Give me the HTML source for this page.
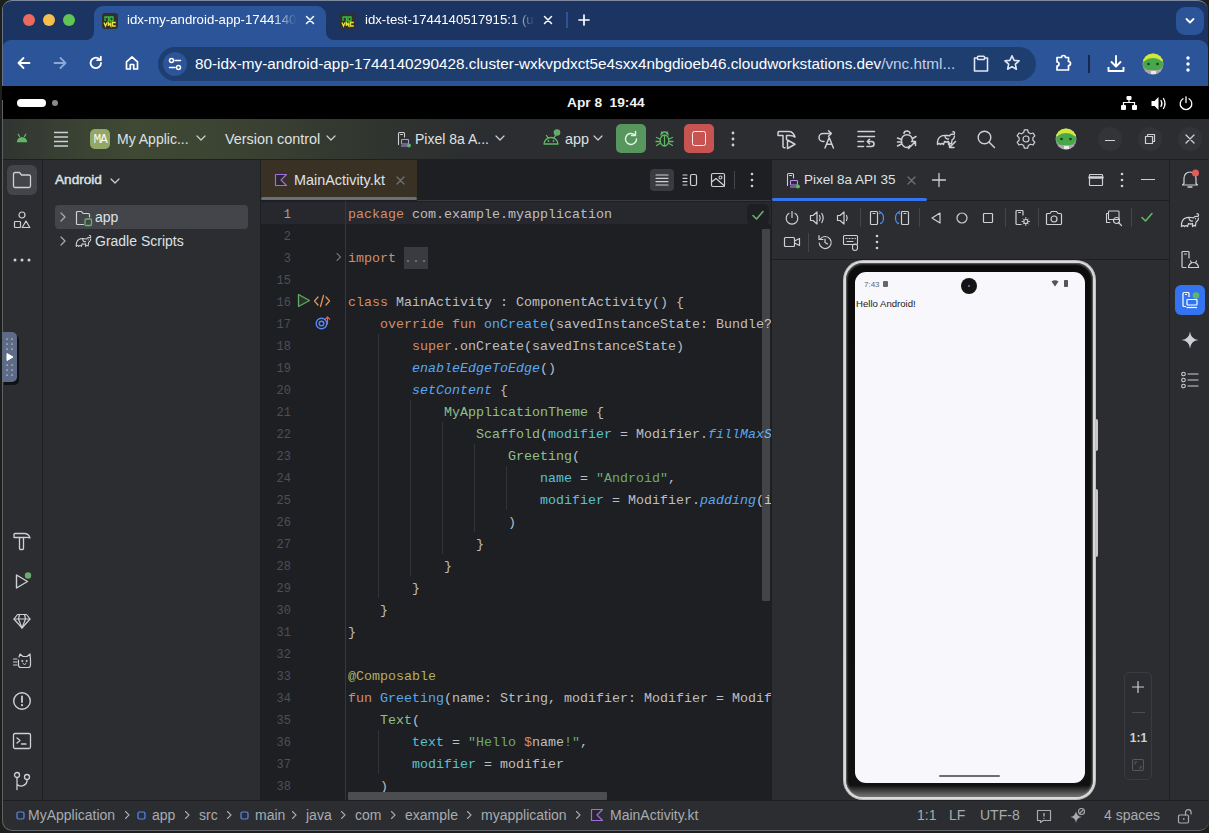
<!DOCTYPE html>
<html><head><meta charset="utf-8">
<style>
*{box-sizing:border-box;margin:0;padding:0}
html,body{width:1209px;height:833px;overflow:hidden}
body{position:relative;background:#1c1f1a;font-family:"Liberation Sans",sans-serif;color:#dfe1e5}
.a{position:absolute}
svg{position:absolute;overflow:visible}
.mono{font-family:"Liberation Mono",monospace}
#win{left:2px;top:0;width:1206px;height:830px;border-radius:10px;overflow:hidden;background:#1c3461;border-top:1px solid #7d889c}
.ui{font-size:14px;white-space:pre;color:#dfe1e5;line-height:16px}
.ln{font-family:"Liberation Mono",monospace;font-size:12px;color:#4b5059;text-align:right;width:40px;left:251px;line-height:22px}
.code{font-family:"Liberation Mono",monospace;font-size:13.33px;white-space:pre;color:#bcbec4;line-height:22px;left:348px}
.k{color:#cf8e6d}.f{color:#56a8f5}.i{font-style:italic;color:#56a8f5}.s{color:#6aab73}.c{color:#8fbf8f}.n{color:#56c1d6}.an{color:#b3ae60}
.guide{width:1px;background:#313438}
.ic{stroke:#ced0d6;fill:none;stroke-width:1.2;stroke-linecap:round;stroke-linejoin:round}
</style></head><body>
<div id="win" class="a">
  <!-- ===== Browser tab strip ===== -->
  <div class="a" style="left:27px;top:19px;width:12px;height:12px;margin:-6px;border-radius:50%;background:#ec6a5e"></div>
  <div class="a" style="left:47px;top:19px;width:12px;height:12px;margin:-6px;border-radius:50%;background:#f4bf4f"></div>
  <div class="a" style="left:67px;top:19px;width:12px;height:12px;margin:-6px;border-radius:50%;background:#61c554"></div>
  <!-- active tab -->
  <div class="a" style="left:92px;top:5px;width:232px;height:35px;background:#2b5598;border-radius:9px 9px 0 0"></div>
  <div class="a" style="left:84px;top:31px;width:8px;height:8px;background:#2b5598"></div>
  <div class="a" style="left:76px;top:23px;width:16px;height:16px;background:#1c3461;border-radius:50%"></div>
  <div class="a" style="left:324px;top:31px;width:8px;height:8px;background:#2b5598"></div>
  <div class="a" style="left:324px;top:23px;width:16px;height:16px;background:#1c3461;border-radius:50%"></div>
  <!-- toolbar -->
  <div class="a" style="left:0;top:39px;width:1206px;height:47px;background:#2b5598;border-radius:9px 9px 0 0"></div>
  <div class="a" style="left:0;top:85px;width:1206px;height:1px;background:#4a78c0"></div>
  <!-- tab 1 content -->
  <svg style="left:100px;top:12px" width="16" height="16"><rect width="16" height="16" rx="3" fill="#303030"/><path d="M3 8V4H6.5V8M8 4H11V8H8Z" stroke="#3dbb3d" stroke-width="1.3" fill="none"/><path d="M2 9.5L3.5 13L5 9.5M6.3 13V9.5L8.8 13V9.5M13.8 9.5H10.5V13H13.8" stroke="#e6e33a" stroke-width="1.3" fill="none"/></svg>
  <div class="a ui" style="left:125px;top:11px;font-size:13.2px;color:#fff;width:170px;overflow:hidden;-webkit-mask-image:linear-gradient(90deg,#000 145px,transparent 170px)">idx-my-android-app-1744140290428</div>
  <svg style="left:303px;top:14px" width="10" height="10"><path d="M1.5 1.5L8.5 8.5M8.5 1.5L1.5 8.5" stroke="#fff" stroke-width="1.5" stroke-linecap="round"/></svg>
  <!-- tab 2 -->
  <svg style="left:338px;top:12px" width="16" height="16"><rect width="16" height="16" rx="3" fill="#303030"/><path d="M3 8V4H6.5V8M8 4H11V8H8Z" stroke="#3dbb3d" stroke-width="1.3" fill="none"/><path d="M2 9.5L3.5 13L5 9.5M6.3 13V9.5L8.8 13V9.5M13.8 9.5H10.5V13H13.8" stroke="#e6e33a" stroke-width="1.3" fill="none"/></svg>
  <div class="a ui" style="left:363px;top:11px;font-size:13.2px;color:#fff;width:170px;overflow:hidden;-webkit-mask-image:linear-gradient(90deg,#000 148px,transparent 170px)">idx-test-1744140517915:1 (us</div>
  <svg style="left:541px;top:14px" width="10" height="10"><path d="M1.5 1.5L8.5 8.5M8.5 1.5L1.5 8.5" stroke="#fff" stroke-width="1.5" stroke-linecap="round"/></svg>
  <div class="a" style="left:564px;top:11px;width:2px;height:16px;background:#2b5598"></div>
  <svg style="left:576px;top:13px" width="12" height="12"><path d="M6 1V11M1 6H11" stroke="#fff" stroke-width="1.7" stroke-linecap="round"/></svg>
  <div class="a" style="left:1174px;top:6px;width:28px;height:28px;background:#2b5598;border-radius:9px"></div>
  <svg style="left:1183px;top:16px" width="10" height="8"><path d="M1.5 2L5 5.5L8.5 2" stroke="#fff" stroke-width="1.8" fill="none" stroke-linecap="round" stroke-linejoin="round"/></svg>
  <!-- toolbar icons -->
  <svg style="left:14px;top:54px" width="16" height="16"><path d="M13.5 8H2.5M7.5 3L2.5 8L7.5 13" stroke="#fff" stroke-width="1.8" fill="none" stroke-linecap="round" stroke-linejoin="round"/></svg>
  <svg style="left:50px;top:54px" width="16" height="16"><path d="M2.5 8H13.5M8.5 3L13.5 8L8.5 13" stroke="#8ea8d6" stroke-width="1.8" fill="none" stroke-linecap="round" stroke-linejoin="round"/></svg>
  <svg style="left:86px;top:54px" width="16" height="16"><path d="M13 8A5.2 5.2 0 1 1 11.2 4" stroke="#fff" stroke-width="1.8" fill="none" stroke-linecap="round"/><path d="M12.8 1.6V5.2H9.2" stroke="#fff" stroke-width="1.8" fill="none" stroke-linecap="round" stroke-linejoin="round"/></svg>
  <svg style="left:122px;top:54px" width="16" height="16"><path d="M2.5 14V6.8L8 2L13.5 6.8V14H9.7V9.5H6.3V14Z" stroke="#fff" stroke-width="1.7" fill="none" stroke-linejoin="round"/></svg>
  <!-- omnibox -->
  <div class="a" style="left:156px;top:46px;width:878px;height:34px;background:#1e3e70;border-radius:17px"></div>
  <div class="a" style="left:161px;top:51px;width:24px;height:24px;background:#2b5598;border-radius:50%"></div>
  <svg style="left:165px;top:55px" width="16" height="16"><circle cx="4.5" cy="4.5" r="2" stroke="#fff" stroke-width="1.5" fill="none"/><path d="M8 4.5H13.5M2.5 11.5H8" stroke="#fff" stroke-width="1.5" stroke-linecap="round"/><circle cx="11.5" cy="11.5" r="2" stroke="#fff" stroke-width="1.5" fill="none"/></svg>
  <div class="a ui" style="left:193px;top:54px;font-size:15.3px;line-height:18px;color:#fff">80-idx-my-android-app-1744140290428.cluster-wxkvpdxct5e4sxx4nbgdioeb46.cloudworkstations.dev<span style="color:#c3cfe6">/vnc.html...</span></div>
  <svg style="left:970px;top:54px" width="18" height="18"><path d="M5.5 3H2.5V16H15.5V3H12.5" stroke="#dfe6f2" stroke-width="1.6" fill="none" stroke-linejoin="round"/><rect x="5.5" y="1.2" width="7" height="3.3" rx="0.8" stroke="#dfe6f2" stroke-width="1.5" fill="none"/></svg>
  <svg style="left:1001px;top:53px" width="18" height="18"><path d="M9 1.8L11.1 6.4L16.1 6.9L12.3 10.2L13.4 15.2L9 12.6L4.6 15.2L5.7 10.2L1.9 6.9L6.9 6.4Z" stroke="#dfe6f2" stroke-width="1.6" fill="none" stroke-linejoin="round"/></svg>
  <svg style="left:1051px;top:53px" width="20" height="20"><path d="M4 3.5H8.5A2 2 0 0 1 12.5 3.5H15.5V7.5A2 2 0 0 1 15.5 11.5V16H4V12A2 2 0 0 0 4 8Z" stroke="#fff" stroke-width="1.7" fill="none" stroke-linejoin="round"/></svg>
  <div class="a" style="left:1086px;top:54px;width:2px;height:18px;background:#17294a"></div>
  <svg style="left:1104px;top:53px" width="20" height="20"><path d="M10 2V12M5.5 8L10 12.5L14.5 8" stroke="#fff" stroke-width="1.9" fill="none" stroke-linecap="round" stroke-linejoin="round"/><path d="M2.5 13V17H17.5V13" stroke="#fff" stroke-width="1.9" fill="none" stroke-linejoin="round"/></svg>
  <svg style="left:1140px;top:52px" width="22" height="22"><defs><clipPath id="c1140"><circle cx="11" cy="11" r="10.5"/></clipPath></defs><g clip-path="url(#c1140)"><rect width="22" height="22" fill="#9aa09a"/><rect y="0" width="22" height="8" fill="#cfe83a"/><ellipse cx="11" cy="11.5" rx="10" ry="6.5" fill="#47a84a"/><rect x="0" y="17" width="22" height="5" fill="#a8aaa8"/><circle cx="6.5" cy="11" r="1.3" fill="#1d3a1d"/><circle cx="15.5" cy="11" r="1.3" fill="#1d3a1d"/><rect x="9" y="18" width="5" height="3" fill="#e8e8f0"/></g></svg>
  <div class="a" style="left:0;top:0;width:1px;height:86px;background:#6a7488"></div>
  <svg style="left:1183px;top:54px" width="6" height="18"><circle cx="3" cy="3" r="1.7" fill="#fff"/><circle cx="3" cy="9" r="1.7" fill="#fff"/><circle cx="3" cy="15" r="1.7" fill="#fff"/></svg>
</div>
<!-- VNC area -->
<div class="a" style="left:2px;top:86px;width:1207px;height:33px;background:#000"></div>
<div class="a" style="left:17px;top:99px;width:29px;height:8px;background:#fff;border-radius:4px"></div>
<div class="a" style="left:52px;top:100px;width:6px;height:6px;background:#8a8a8a;border-radius:50%"></div>
<div class="a ui" style="left:567px;top:95px;font-size:13.7px;font-weight:700;color:#f2f2f2">Apr 8  19:44</div>
<svg style="left:1121px;top:96px" width="16" height="14"><rect x="5.5" y="0" width="5" height="4" rx="1" fill="#fff"/><rect x="0" y="9" width="5" height="5" rx="1" fill="#fff"/><rect x="11" y="9" width="5" height="5" rx="1" fill="#fff"/><path d="M8 4V6.5M2.5 9V6.5H13.5V9" stroke="#fff" stroke-width="1.2" fill="none"/></svg>
<svg style="left:1151px;top:96px" width="16" height="15"><path d="M0.5 5H3.5L7.5 1V14L3.5 10H0.5Z" fill="#fff"/><path d="M10 4.5Q11.8 7.5 10 10.5M12.5 2.5Q15.5 7.5 12.5 12.5" stroke="#fff" stroke-width="1.3" fill="none" stroke-linecap="round"/></svg>
<svg style="left:1179px;top:96px" width="14" height="14"><path d="M4 2.8A5.8 5.8 0 1 0 10 2.8" stroke="#fff" stroke-width="1.3" fill="none" stroke-linecap="round"/><path d="M7 0.8V6.5" stroke="#fff" stroke-width="1.3" stroke-linecap="round"/></svg>

<!-- ===== IDE ===== -->
<div class="a" style="left:0;top:0;width:1209px;height:833px;clip-path:inset(119px 0px 2px 2px round 0 0 10px 10px)">
  <div class="a" style="left:2px;top:119px;width:1207px;height:712px;background:#2b2d30"></div>
  <!-- main toolbar -->
  <div class="a" style="left:2px;top:119px;width:1206px;height:40px;background:linear-gradient(90deg,#313431 0,#394033 60px,#3f4934 130px,#3b4232 240px,#31352f 370px,#2b2d30 480px)"></div>
  <div class="a" style="left:2px;top:159px;width:1206px;height:1px;background:#1e1f22"></div>
  <!-- left strip border -->
  <div class="a" style="left:42px;top:160px;width:1px;height:641px;background:#1e1f22"></div>
  <div class="a" style="left:260px;top:160px;width:1px;height:641px;background:#1e1f22"></div>
  <!-- editor -->
  <div class="a" style="left:261px;top:160px;width:511px;height:641px;background:#1e1f22"></div>
  <div class="a" style="left:261px;top:160px;width:156px;height:37px;background:#3a3125"></div>
  <div class="a" style="left:261px;top:197px;width:156px;height:3px;background:#6b6e73;border-radius:1.5px"></div>
  <div class="a" style="left:417px;top:200px;width:354px;height:1px;background:#393b40"></div>
  <div class="a" style="left:261px;top:202px;width:510px;height:22px;background:#26282e"></div>
  <div class="a" style="left:345px;top:201px;width:1px;height:600px;background:#35373c"></div>
  <!-- emulator panel border -->
  <div class="a" style="left:771px;top:160px;width:1px;height:641px;background:#1e1f22"></div>
  <div class="a" style="left:772px;top:200px;width:398px;height:1px;background:#1e1f22"></div>
  <div class="a" style="left:772px;top:259px;width:398px;height:1px;background:#1e1f22"></div>
  <div class="a" style="left:1169px;top:160px;width:1px;height:641px;background:#1e1f22"></div>
  <div class="a" style="left:772px;top:198px;width:155px;height:3px;background:#3574f0;border-radius:1.5px"></div>
  <!-- toolbar content -->
  <svg style="left:16px;top:133px" width="12" height="10"><path d="M0.8 9.2A5.2 5.2 0 0 1 11.2 9.2Z" fill="#5fb865"/><path d="M2.2 1.2L3.6 3.6M9.8 1.2L8.4 3.6" stroke="#5fb865" stroke-width="1.2" stroke-linecap="round"/></svg>
  <svg style="left:53px;top:131px" width="16" height="16"><path d="M1 1.5H15M1 6H15M1 10.5H15M1 15H15" stroke="#ced0d6" stroke-width="1.3"/></svg>
  <div class="a" style="left:90px;top:129px;width:20px;height:20px;border-radius:5px;background:#94a865"></div>
  <div class="a mono" style="left:89px;top:132px;width:22px;text-align:center;font-size:13px;line-height:16px;color:#f6f6f0;letter-spacing:-1.2px">MA</div>
  <div class="a ui" style="left:117px;top:131px;font-size:14px">My Applic...</div>
  <svg style="left:196px;top:135px" width="10" height="6"><path d="M1 1L5 5L9 1" class="ic"/></svg>
  <div class="a ui" style="left:225px;top:131px;font-size:14.4px">Version control</div>
  <svg style="left:326px;top:135px" width="10" height="6"><path d="M1 1L5 5L9 1" class="ic"/></svg>
  <svg style="left:397px;top:132px" width="16" height="16"><path d="M1.5 12.5V1.5A1 1 0 0 1 2.5 0.5H6.5A1 1 0 0 1 7.5 1.5V5" class="ic" style="stroke-width:1.1"/><path d="M3.5 2.5H5.5" class="ic" style="stroke-width:1"/><rect x="4.5" y="7.5" width="7" height="4.5" rx="0.8" stroke="#b494ee" stroke-width="1.1" fill="none"/><path d="M4 14H11" stroke="#b494ee" stroke-width="1.1"/><circle cx="12" cy="13.5" r="1.9" fill="#5fb865"/></svg>
  <div class="a ui" style="left:415px;top:131px;font-size:14px">Pixel 8a A...</div>
  <svg style="left:495px;top:135px" width="10" height="6"><path d="M1 1L5 5L9 1" class="ic"/></svg>
  <svg style="left:542px;top:127px" width="22" height="18"><path d="M2 17A7 6.5 0 0 1 16 17Z" stroke="#5fb865" stroke-width="1.3" fill="none" stroke-linejoin="round"/><path d="M4.5 8.5L6 10.8M13.5 8.5L12 10.8" stroke="#5fb865" stroke-width="1.3" stroke-linecap="round"/><circle cx="6.5" cy="14" r="0.9" fill="#5fb865"/><circle cx="11.5" cy="14" r="0.9" fill="#5fb865"/><circle cx="15" cy="5.5" r="3.3" fill="#6aa86e"/></svg>
  <div class="a ui" style="left:565px;top:131px;font-size:14.4px">app</div>
  <svg style="left:593px;top:135px" width="10" height="6"><path d="M1 1L5 5L9 1" class="ic"/></svg>
  <div class="a" style="left:616px;top:124px;width:30px;height:29px;border-radius:5px;background:#57965c"></div>
  <svg style="left:622px;top:130px" width="18" height="18"><path d="M14.5 9A5.5 5.5 0 1 1 12.6 4.8" stroke="#eaf3ea" stroke-width="1.4" fill="none" stroke-linecap="round"/><path d="M13.5 1.5V5.5H9.5" stroke="#eaf3ea" stroke-width="1.4" fill="none" stroke-linecap="round" stroke-linejoin="round"/></svg>
  <svg style="left:655px;top:130px" width="19" height="18"><ellipse cx="9.5" cy="10.5" rx="4.3" ry="5.5" stroke="#5fb865" stroke-width="1.3" fill="none"/><path d="M6 5A3.5 3 0 0 1 13 5M9.5 6V15.5M1.5 7.5L5 9M1 11.5H5M1.5 15.5L5 13.5M17.5 7.5L14 9M18 11.5H14M17.5 15.5L14 13.5M6.5 2L7.5 3.5M12.5 2L11.5 3.5" stroke="#5fb865" stroke-width="1.3" fill="none" stroke-linecap="round"/></svg>
  <div class="a" style="left:684px;top:124px;width:30px;height:29px;border-radius:5px;background:#c75450"></div>
  <div class="a" style="left:692px;top:131px;width:14px;height:15px;border:1.6px solid #fbecec;border-radius:2.5px"></div>
  <svg style="left:731px;top:131px" width="4" height="16"><circle cx="2" cy="2" r="1.4" fill="#ced0d6"/><circle cx="2" cy="8" r="1.4" fill="#ced0d6"/><circle cx="2" cy="14" r="1.4" fill="#ced0d6"/></svg>
  <!-- right toolbar icons -->
  <svg style="left:776px;top:129px" width="22" height="21"><g class="ic" style="stroke-width:1.5"><path d="M2 6.5V3.5Q2 2.5 3 2.5H13Q17 2.5 19 8Q16.5 6.5 13.5 6.5H10.5V10.5M7 6.5V17.5Q7 18.8 8.3 18.8H9M2 6.5H7"/><path d="M11.5 11V19.5L19 15.25Z"/></g></svg>
  <svg style="left:816px;top:129px" width="21" height="21"><g class="ic" style="stroke-width:1.5"><path d="M15 4.5H7A4 4 0 0 0 7 12.5H8"/><path d="M12.5 1.8L15.3 4.5L12.5 7.2"/><path d="M9 19L13.2 8.5L17.4 19M10.5 15.3H15.9"/></g></svg>
  <svg style="left:856px;top:129px" width="21" height="21"><g class="ic" style="stroke-width:1.6"><path d="M2 2.5H18.5M2 7.5H18.5M2 12.5H7.5M2 17.5H7.5"/><path d="M11.5 12.5H15.5A2.5 2.5 0 0 1 15.5 17.5H11M13.5 10.3L11.3 12.5L13.5 14.7"/></g></svg>
  <svg style="left:896px;top:129px" width="21" height="21"><g class="ic" style="stroke-width:1.5"><path d="M8 4.5A3 2.5 0 0 1 14 4.5"/><path d="M14 16.5Q12.5 18.5 11 18.5A5.5 6 0 0 1 5.5 12.5V11A5.5 5.2 0 0 1 16.5 11V12"/><path d="M1.5 9L5.5 10.5M1.5 13H5.5M1.5 17L5.5 15M20 7.5L16.5 9.5"/><path d="M12.5 19.5L19.5 12.5M15.5 12.5H19.5V16.5"/></g></svg>
  <svg style="left:936px;top:130px" width="22" height="20"><g transform="scale(1)"><path d="M1.5 14.5Q1 9 4.5 6.5Q7 5 11 5.5L13.5 5.8Q14.5 4 16.5 4.3Q18.8 4.8 18.5 2.8Q18.3 1.5 17 1.8M1.5 14.5Q3 12.5 4.5 14.5Q6 12.5 7.5 14.5L8.5 11.5Q10.5 12.5 12.5 11.5V14.5Q14 12.8 15.5 14L16 10Q18.5 8.5 18.5 6M9 6Q9.5 9.5 12.5 9" fill="none" stroke="#ced0d6" stroke-width="1.4" stroke-linecap="round" stroke-linejoin="round"/></g><path d="M19.5 11.5L14 17M13.5 13V17.5H18" class="ic" style="stroke-width:1.5"/></svg>
  <svg style="left:976px;top:129px" width="20" height="20"><circle cx="8.5" cy="8.5" r="6.3" class="ic" style="stroke-width:1.4"/><path d="M13 13L18.5 18.5" class="ic" style="stroke-width:1.5"/></svg>
  <svg style="left:1016px;top:129px" width="20" height="20"><path d="M8.3 1.5H11.7L12.3 4.1L14.6 5.4L17.1 4.6L18.8 7.5L16.9 9.3V11.9L18.8 13.7L17.1 16.6L14.6 15.8L12.3 17.1L11.7 19.7H8.3L7.7 17.1L5.4 15.8L2.9 16.6L1.2 13.7L3.1 11.9V9.3L1.2 7.5L2.9 4.6L5.4 5.4L7.7 4.1Z" class="ic" transform="translate(0,-0.6)"/><circle cx="10" cy="10" r="3" class="ic"/></svg>
  <svg style="left:1055px;top:128px" width="22" height="22"><defs><clipPath id="c1055"><circle cx="11" cy="11" r="10.5"/></clipPath></defs><g clip-path="url(#c1055)"><rect width="22" height="22" fill="#9aa09a"/><rect y="0" width="22" height="8" fill="#cfe83a"/><ellipse cx="11" cy="11.5" rx="10" ry="6.5" fill="#47a84a"/><rect x="0" y="17" width="22" height="5" fill="#a8aaa8"/><circle cx="6.5" cy="11" r="1.3" fill="#1d3a1d"/><circle cx="15.5" cy="11" r="1.3" fill="#1d3a1d"/><rect x="9" y="18" width="5" height="3" fill="#e8e8f0"/></g></svg>
  <div class="a" style="left:1098px;top:127px;width:24px;height:24px;border-radius:50%;background:#323438"></div>
  <div class="a" style="left:1105px;top:140px;width:10px;height:1.3px;background:#ced0d6"></div>
  <div class="a" style="left:1138px;top:127px;width:24px;height:24px;border-radius:50%;background:#323438"></div>
  <svg style="left:1144px;top:133px" width="12" height="12"><rect x="1.5" y="3.5" width="7" height="7" class="ic"/><path d="M3.5 3.5V1.5H10.5V8.5H8.5" class="ic"/></svg>
  <div class="a" style="left:1178px;top:127px;width:24px;height:24px;border-radius:50%;background:#323438"></div>
  <svg style="left:1185px;top:134px" width="10" height="10"><path d="M1 1L9 9M9 1L1 9" class="ic" style="stroke-width:1.3"/></svg>
  <!-- left strip -->
  <div class="a" style="left:7px;top:165px;width:30px;height:30px;border-radius:6px;background:#43454a"></div>
  <svg style="left:12px;top:171px" width="20" height="18"><path d="M1.5 3A1.5 1.5 0 0 1 3 1.5H7.5L9.5 4H17A1.5 1.5 0 0 1 18.5 5.5V15A1.5 1.5 0 0 1 17 16.5H3A1.5 1.5 0 0 1 1.5 15Z" class="ic" style="stroke-width:1.3"/></svg>
  <svg style="left:13px;top:211px" width="18" height="18"><circle cx="9" cy="4" r="3" class="ic"/><rect x="1.5" y="10.5" width="6" height="6" rx="0.8" class="ic"/><path d="M13 10L16.8 16.5H9.2Z" class="ic"/></svg>
  <svg style="left:13px;top:258px" width="18" height="4"><circle cx="2" cy="2" r="1.5" fill="#ced0d6"/><circle cx="9" cy="2" r="1.5" fill="#ced0d6"/><circle cx="16" cy="2" r="1.5" fill="#ced0d6"/></svg>
  <svg style="left:12px;top:531px" width="20" height="20"><path d="M2 6.5V3.5Q2 2.5 3 2.5H12.5Q16.5 2.5 18 7Q16 6 13 6.5H2" class="ic" style="stroke-width:1.3"/><path d="M7.5 6.5V17.5Q7.5 18.5 8.5 18.5H10.5Q11.5 18.5 11.5 17.5V6.5" class="ic" style="stroke-width:1.3"/></svg>
  <svg style="left:12px;top:571px" width="20" height="20"><path d="M4.5 4V17L15.5 10.5Z" class="ic" style="stroke-width:1.4"/><circle cx="16" cy="4.5" r="3.2" fill="#6aab6e"/></svg>
  <svg style="left:12px;top:611px" width="20" height="20"><path d="M5.5 3.5H14.5L18 8L10 17L2 8Z" class="ic"/><path d="M2 8H18M7.5 3.5L6.5 8L10 17L13.5 8L12.5 3.5" class="ic"/></svg>
  <svg style="left:12px;top:651px" width="20" height="20"><path d="M7 6L8 3L11 5.5H15L18 3L18.5 9V14A2.5 2.5 0 0 1 16 16.5H9A2.5 2.5 0 0 1 6.5 14V9" class="ic"/><path d="M1.5 8H5M1.5 11H5M1.5 14H5" class="ic"/><circle cx="10.3" cy="10" r="1" fill="#ced0d6"/><circle cx="14.7" cy="10" r="1" fill="#ced0d6"/><path d="M11 12.5L12.5 13.5L14 12.5" class="ic" style="stroke-width:1"/></svg>
  <svg style="left:12px;top:691px" width="20" height="20"><circle cx="10" cy="10" r="8.3" class="ic" style="stroke-width:1.4"/><path d="M10 5.5V11" class="ic" style="stroke-width:1.8"/><circle cx="10" cy="14.2" r="1.1" fill="#ced0d6"/></svg>
  <svg style="left:12px;top:731px" width="20" height="20"><rect x="1.5" y="2.5" width="17" height="15" rx="1.5" class="ic" style="stroke-width:1.3"/><path d="M5 7L8 9.5L5 12M9.5 13H14" class="ic" style="stroke-width:1.3"/></svg>
  <svg style="left:12px;top:771px" width="20" height="20"><circle cx="5" cy="4" r="2.5" class="ic" style="stroke-width:1.3"/><circle cx="15" cy="6" r="2.5" class="ic" style="stroke-width:1.3"/><path d="M5 6.5V18.5M15 8.5A6 6 0 0 1 5 13.5" class="ic" style="stroke-width:1.3"/></svg>
  <!-- project panel -->
  <div class="a ui" style="left:55px;top:172px;font-size:13.6px;font-weight:400;-webkit-text-stroke:0.45px #dfe1e5;color:#dfe1e5">Android</div>
  <svg style="left:110px;top:178px" width="10" height="6"><path d="M1 1L5 5L9 1" class="ic"/></svg>
  <div class="a" style="left:55px;top:205px;width:193px;height:24px;border-radius:4px;background:#43454a"></div>
  <svg style="left:59px;top:211px" width="8" height="12"><path d="M2 2L6 6L2 10" class="ic" style="stroke:#a8abb0"/></svg>
  <svg style="left:75px;top:210px" width="18" height="16"><path d="M8.5 14.5H2.5A1 1 0 0 1 1.5 13.5V2.5A1 1 0 0 1 2.5 1.5H6.5L8 3.5H13.5A1 1 0 0 1 14.5 4.5V7" class="ic" style="stroke:#ced0d6"/><rect x="10" y="9" width="6.5" height="6.5" rx="1.2" stroke="#5fb865" stroke-width="1.3" fill="none"/></svg>
  <div class="a ui" style="left:95px;top:209px;font-size:14px;color:#dfe1e5">app</div>
  <svg style="left:59px;top:235px" width="8" height="12"><path d="M2 2L6 6L2 10" class="ic" style="stroke:#a8abb0"/></svg>
  <svg style="left:75px;top:234px" width="19" height="15"><g transform="scale(0.85)"><path d="M1.5 14.5Q1 9 4.5 6.5Q7 5 11 5.5L13.5 5.8Q14.5 4 16.5 4.3Q18.8 4.8 18.5 2.8Q18.3 1.5 17 1.8M1.5 14.5Q3 12.5 4.5 14.5Q6 12.5 7.5 14.5L8.5 11.5Q10.5 12.5 12.5 11.5V14.5Q14 12.8 15.5 14L16 10Q18.5 8.5 18.5 6M9 6Q9.5 9.5 12.5 9" fill="none" stroke="#ced0d6" stroke-width="1.3" stroke-linecap="round" stroke-linejoin="round"/><circle cx="15.5" cy="6.8" r="0.7" fill="#ced0d6"/></g></svg>
  <div class="a ui" style="left:95px;top:233px;font-size:14px;color:#dfe1e5">Gradle Scripts</div>
  <!-- editor tab -->
  <svg style="left:274px;top:173px" width="14" height="14"><path d="M1.5 1.5H12.5L7 7L12.5 12.5H1.5Z" stroke="#9c70d8" stroke-width="1.2" fill="#2b2531" stroke-linejoin="round"/></svg>
  <div class="a ui" style="left:294px;top:172px;font-size:14.4px;color:#dfe1e5">MainActivity.kt</div>
  <svg style="left:396px;top:176px" width="9" height="9"><path d="M1 1L8 8M8 1L1 8" stroke="#6f737a" stroke-width="1.2" stroke-linecap="round"/></svg>
  <div class="a" style="left:650px;top:169px;width:24px;height:22px;border-radius:4px;background:#393b40"></div>
  <svg style="left:654px;top:172px" width="16" height="16"><path d="M2 3H14M2 6.3H14M2 9.6H14M2 13H14" class="ic" style="stroke-width:1.2"/></svg>
  <svg style="left:682px;top:172px" width="16" height="16"><path d="M1 3H5M1 6.3H5M1 9.6H5M1 13H5" class="ic" style="stroke-width:1.2"/><rect x="8.5" y="2.5" width="6" height="11" rx="1.5" class="ic" style="stroke-width:1.2"/></svg>
  <svg style="left:710px;top:172px" width="16" height="16"><rect x="1.5" y="1.5" width="13" height="13" rx="1.5" class="ic" style="stroke-width:1.2"/><circle cx="10.5" cy="5.5" r="1.5" class="ic" style="stroke-width:1.1"/><path d="M1.5 10L6 6.5L14.5 14" class="ic" style="stroke-width:1.2"/></svg>
  <div class="a" style="left:734px;top:171px;width:1px;height:18px;background:#43454a"></div>
  <svg style="left:750px;top:172px" width="4" height="16"><circle cx="2" cy="2" r="1.3" fill="#ced0d6"/><circle cx="2" cy="8" r="1.3" fill="#ced0d6"/><circle cx="2" cy="14" r="1.3" fill="#ced0d6"/></svg>
  <!-- editor gutter & code -->
<div class="a ln" style="top:204px"><span style="color:#a1a3ab">1</span><br>2<br>3<br>15<br>16<br>17<br>18<br>19<br>20<br>21<br>22<br>23<br>24<br>25<br>26<br>27<br>28<br>29<br>30<br>31<br>32<br>33<br>34<br>35<br>36<br>37<br>38</div>
<div class="a code" style="top:204px;width:423px;overflow:hidden;height:597px"><span class="k">package</span> com.example.myapplication

<span class="k">import</span> <span style="background:#393b40;color:#7a7e85;padding:4px 0 3px">...</span>

<span class="k">class</span> MainActivity : ComponentActivity() {
    <span class="k">override fun</span> <span class="f">onCreate</span>(savedInstanceState: Bundle?) {
        <span class="k">super</span>.onCreate(savedInstanceState)
        <span class="i">enableEdgeToEdge</span>()
        <span class="i">setContent</span> {
            <span class="c">MyApplicationTheme</span> {
                <span class="c">Scaffold</span>(<span class="n">modifier</span> = Modifier.<span class="i">fillMaxSize</span>()) { innerPadding -&gt;
                    <span class="c">Greeting</span>(
                        <span class="n">name</span> = <span class="s">"Android"</span>,
                        <span class="n">modifier</span> = Modifier.<span class="i">padding</span>(innerPadding)
                    )
                }
            }
        }
    }
}

<span class="an">@Composable</span>
<span class="k">fun</span> <span class="f">Greeting</span>(name: String, modifier: Modifier = Modifier) {
    <span class="c">Text</span>(
        <span class="n">text</span> = <span class="s">"Hello </span><span class="k">$</span>name<span class="s">!"</span>,
        <span class="n">modifier</span> = modifier
    )</div>

  <div class="a guide" style="left:378px;top:334px;height:264px"></div>
  <div class="a guide" style="left:410px;top:400px;height:176px"></div>
  <div class="a guide" style="left:442px;top:422px;height:132px"></div>
  <div class="a guide" style="left:474px;top:444px;height:88px"></div>
  <div class="a guide" style="left:506px;top:466px;height:44px"></div>
  <div class="a guide" style="left:378px;top:730px;height:44px"></div>
  <svg style="left:335px;top:252px" width="8" height="10"><path d="M2 1.5L5.5 5L2 8.5" stroke="#6f737a" stroke-width="1.1" fill="none" stroke-linecap="round"/></svg>
  <svg style="left:297px;top:293px" width="14" height="15"><path d="M1.5 1.5L12.5 7.5L1.5 13.5Z" fill="#27362a" stroke="#62a866" stroke-width="1.3" stroke-linejoin="round"/></svg>
  <svg style="left:313px;top:294px" width="18" height="14"><path d="M5 3L1.5 7L5 11M13 3L16.5 7L13 11M10.5 1.5L7.5 12.5" stroke="#e0945f" stroke-width="1.3" fill="none" stroke-linecap="round" stroke-linejoin="round"/></svg>
  <svg style="left:315px;top:315px" width="16" height="15"><circle cx="6.5" cy="8.5" r="5.3" stroke="#548af7" stroke-width="1.4" fill="none"/><circle cx="6.5" cy="8.5" r="2.3" stroke="#548af7" stroke-width="1.4" fill="none"/><path d="M12.5 9V2M10.3 4.2L12.5 1.8L14.7 4.2" stroke="#e55b5b" stroke-width="1.2" fill="none" stroke-linecap="round" stroke-linejoin="round"/></svg>
  <div class="a" style="left:747px;top:204px;width:22px;height:21px;border-radius:5px;background:#1e1f22"></div>
  <svg style="left:751px;top:209px" width="14" height="12"><path d="M2 6.5L5.5 10L12 2.5" stroke="#6aaf6e" stroke-width="1.6" fill="none" stroke-linecap="round" stroke-linejoin="round"/></svg>
  <div class="a" style="left:762px;top:229px;width:8px;height:372px;border-radius:1px;background:rgba(255,255,255,0.17)"></div>
  <div class="a" style="left:348px;top:792px;width:259px;height:8px;border-radius:1px;background:#4b4d51"></div>
  <!-- emulator header -->
  <svg style="left:786px;top:173px" width="16" height="16"><path d="M1.5 12.5V1.5A1 1 0 0 1 2.5 0.5H6.5A1 1 0 0 1 7.5 1.5V5" class="ic" style="stroke-width:1.1"/><path d="M3.5 2.5H5.5" class="ic" style="stroke-width:1"/><rect x="4.5" y="7.5" width="7" height="4.5" rx="0.8" stroke="#b494ee" stroke-width="1.1" fill="none"/><path d="M4 14H11" stroke="#b494ee" stroke-width="1.1"/><circle cx="12" cy="13.5" r="1.9" fill="#5fb865"/></svg>
  <div class="a ui" style="left:804px;top:172px;font-size:13.5px;color:#dfe1e5">Pixel 8a API 35</div>
  <svg style="left:907px;top:176px" width="9" height="9"><path d="M1 1L8 8M8 1L1 8" stroke="#6f737a" stroke-width="1.2" stroke-linecap="round"/></svg>
  <svg style="left:931px;top:172px" width="16" height="16"><path d="M8 1.5V14.5M1.5 8H14.5" class="ic" style="stroke-width:1.3"/></svg>
  <svg style="left:1088px;top:172px" width="16" height="16"><rect x="1.5" y="2.5" width="13" height="11" rx="0.8" class="ic" style="stroke-width:1.2"/><path d="M1.5 5.5H14.5" class="ic" style="stroke-width:2.4"/></svg>
  <svg style="left:1120px;top:172px" width="4" height="16"><circle cx="2" cy="2" r="1.3" fill="#ced0d6"/><circle cx="2" cy="8" r="1.3" fill="#ced0d6"/><circle cx="2" cy="14" r="1.3" fill="#ced0d6"/></svg>
  <div class="a" style="left:1141px;top:179px;width:14px;height:1.3px;background:#ced0d6"></div>
  <!-- emulator toolbar row 1 -->
  <svg style="left:784px;top:210px" width="16" height="16"><path d="M5 3.3A5.8 5.8 0 1 0 11 3.3" class="ic" style="stroke-width:1.2"/><path d="M8 1.5V7.5" class="ic" style="stroke-width:1.2"/></svg>
  <svg style="left:809px;top:210px" width="17" height="16"><path d="M1.5 5.5H4L8 2V14L4 10.5H1.5Z" class="ic" style="stroke-width:1.2"/><path d="M10.5 5.5Q12 8 10.5 10.5M12.8 3.5Q15.5 8 12.8 12.5" class="ic" style="stroke-width:1.2"/></svg>
  <svg style="left:835px;top:210px" width="16" height="16"><path d="M2.5 5.5H5L9 2V14L5 10.5H2.5Z" class="ic" style="stroke-width:1.2"/><path d="M11.5 5.5Q13 8 11.5 10.5" class="ic" style="stroke-width:1.2"/></svg>
  <div class="a" style="left:860px;top:208px;width:1px;height:19px;background:#43454a"></div>
  <svg style="left:869px;top:210px" width="17" height="16"><rect x="1.5" y="1.5" width="7" height="13" rx="1" class="ic" style="stroke-width:1.2"/><path d="M11 2.5A3.5 5.5 0 0 1 11 13.5" stroke="#548af7" stroke-width="1.3" fill="none"/><path d="M10 0.8L11.5 2.5L10 4" stroke="#548af7" stroke-width="1.1" fill="none"/><path d="M4 3.5H6" class="ic" style="stroke-width:1"/></svg>
  <svg style="left:894px;top:210px" width="17" height="16"><rect x="7.5" y="1.5" width="7" height="13" rx="1" class="ic" style="stroke-width:1.2"/><path d="M5 2.5A3.5 5.5 0 0 0 5 13.5" stroke="#548af7" stroke-width="1.3" fill="none"/><path d="M6 0.8L4.5 2.5L6 4" stroke="#548af7" stroke-width="1.1" fill="none"/><path d="M10 3.5H12" class="ic" style="stroke-width:1"/></svg>
  <div class="a" style="left:919px;top:208px;width:1px;height:19px;background:#43454a"></div>
  <svg style="left:929px;top:211px" width="14" height="14"><path d="M11 2L3 7L11 12Z" class="ic" style="stroke-width:1.2"/></svg>
  <svg style="left:955px;top:211px" width="14" height="14"><circle cx="7" cy="7" r="5" class="ic" style="stroke-width:1.2"/></svg>
  <svg style="left:981px;top:211px" width="14" height="14"><rect x="2.5" y="2.5" width="9" height="9" rx="0.8" class="ic" style="stroke-width:1.2"/></svg>
  <div class="a" style="left:1005px;top:208px;width:1px;height:19px;background:#43454a"></div>
  <svg style="left:1014px;top:209px" width="17" height="18"><path d="M9 6V2.5A1 1 0 0 0 8 1.5H3A1 1 0 0 0 2 2.5V14.5A1 1 0 0 0 3 15.5H7" class="ic" style="stroke-width:1.2"/><path d="M4.5 3.5H6.5" class="ic" style="stroke-width:1.1"/><circle cx="11.8" cy="12.5" r="2" class="ic" style="stroke-width:1.1"/><path d="M11.8 8.5V9.5M11.8 15.5V16.5M8 12.5H9M14.6 12.5H15.6M9.3 10L10 10.7M13.6 14.3L14.3 15M9.3 15L10 14.3M13.6 10.7L14.3 10" class="ic" style="stroke-width:1"/></svg>
  <div class="a" style="left:1038px;top:208px;width:1px;height:19px;background:#43454a"></div>
  <svg style="left:1045px;top:210px" width="18" height="16"><path d="M1.5 4.5A1 1 0 0 1 2.5 3.5H5L6.5 1.5H11.5L13 3.5H15.5A1 1 0 0 1 16.5 4.5V13.5A1 1 0 0 1 15.5 14.5H2.5A1 1 0 0 1 1.5 13.5Z" class="ic" style="stroke-width:1.2"/><circle cx="9" cy="9" r="3" class="ic" style="stroke-width:1.2"/></svg>
  <svg style="left:1105px;top:209px" width="18" height="18"><path d="M1.5 4.5H3.5M1.5 4.5V13.5H5" class="ic" style="stroke-width:1.1"/><rect x="3.5" y="2" width="10.5" height="8.5" rx="0.8" class="ic" style="stroke-width:1.1"/><circle cx="11.5" cy="11.5" r="3" class="ic" style="stroke-width:1.2"/><path d="M13.7 13.7L16.5 16.5" class="ic" style="stroke-width:1.3"/></svg>
  <div class="a" style="left:1131px;top:208px;width:1px;height:19px;background:#43454a"></div>
  <svg style="left:1140px;top:211px" width="14" height="12"><path d="M2 6.5L5.5 10L12 2.5" stroke="#5fb865" stroke-width="1.6" fill="none" stroke-linecap="round" stroke-linejoin="round"/></svg>
  <!-- row 2 -->
  <svg style="left:783px;top:234px" width="18" height="16"><rect x="1.5" y="3.5" width="10" height="9" rx="1" class="ic" style="stroke-width:1.2"/><path d="M11.5 7L16.5 4.5V11.5L11.5 9" class="ic" style="stroke-width:1.2"/></svg>
  <div class="a" style="left:808px;top:233px;width:1px;height:19px;background:#43454a"></div>
  <svg style="left:817px;top:234px" width="16" height="16"><path d="M3.3 5A6 6 0 1 1 2.2 9" class="ic" style="stroke-width:1.2"/><path d="M2 1.5V5.5H6" class="ic" style="stroke-width:1.2"/><path d="M8 5V8.5L10.5 10" class="ic" style="stroke-width:1.2"/></svg>
  <svg style="left:842px;top:234px" width="18" height="17"><rect x="1.5" y="1.5" width="14" height="9" rx="1" class="ic" style="stroke-width:1.1"/><path d="M4 4.5H5M7 4.5H8M10 4.5H11M13 4.5H13.5M5 7.5H11" class="ic" style="stroke-width:1.1"/><rect x="10.5" y="10" width="5" height="6.5" rx="2.5" class="ic" style="stroke-width:1.1"/></svg>
  <svg style="left:875px;top:234px" width="4" height="16"><circle cx="2" cy="2" r="1.3" fill="#ced0d6"/><circle cx="2" cy="8" r="1.3" fill="#ced0d6"/><circle cx="2" cy="14" r="1.3" fill="#ced0d6"/></svg>
  <!-- phone -->
  <div class="a" style="left:1092px;top:419px;width:6px;height:32px;border-radius:2px;background:#c9c9c9"></div>
  <div class="a" style="left:1092px;top:489px;width:6px;height:68px;border-radius:2px;background:#c9c9c9"></div>
  <div class="a" style="left:843px;top:260px;width:253px;height:540px;border-radius:20px;background:#bdbdbd"></div>
  <div class="a" style="left:844px;top:261px;width:251px;height:538px;border-radius:19px;background:#dadada"></div>
  <div class="a" style="left:846px;top:263px;width:247px;height:534px;border-radius:17px;background:linear-gradient(180deg,#0c0c0c 0,#111 97.8%,#777 100%);box-shadow:inset 0 0 2px 1px #6a6a6a"></div>
  <div class="a" style="left:855px;top:272px;width:230px;height:511px;border-radius:11px;background:#f8f7fc"></div>
  <div class="a" style="left:961px;top:278px;width:16px;height:16px;border-radius:50%;background:#151515"></div>
  <div class="a" style="left:968px;top:285px;width:1.5px;height:1.5px;background:#4a6a9a"></div>
  <div class="a ui" style="left:864px;top:280px;font-size:8px;line-height:9px;color:#666">7:43</div>
  <div class="a" style="left:883px;top:281px;width:5px;height:6px;border-radius:1px;background:#666"></div>
  <svg style="left:1051px;top:280px" width="8" height="7"><path d="M0.5 1.5Q4 -1 7.5 1.5L4 6.5Z" fill="#555"/></svg>
  <div class="a" style="left:1064px;top:280px;width:4px;height:7px;border-radius:0.8px;background:#555"></div>
  <div class="a ui" style="left:856px;top:298px;font-size:9.6px;line-height:11px;color:#1d1b20">Hello Android!</div>
  <div class="a" style="left:939px;top:775px;width:61px;height:2px;border-radius:1px;background:#6d6d6d"></div>
  <!-- zoom controls -->
  <div class="a" style="left:1124px;top:672px;width:28px;height:108px;border-radius:5px;border:1px solid #393b40"></div>
  <svg style="left:1131px;top:680px" width="14" height="14"><path d="M7 1.5V12.5M1.5 7H12.5" class="ic" style="stroke-width:1.2"/></svg>
  <div class="a" style="left:1132px;top:712px;width:13px;height:1px;background:#4b4d52"></div>
  <div class="a ui" style="left:1125px;top:732px;width:27px;text-align:center;font-size:12px;line-height:13px;font-weight:700;color:#ced0d6">1:1</div>
  <svg style="left:1131px;top:758px" width="14" height="14"><rect x="1.5" y="1.5" width="11" height="11" rx="1.5" stroke="#55585e" stroke-width="1.1" fill="none"/><path d="M4 6.5V4H6.5M10 7.5V10H7.5" stroke="#55585e" stroke-width="1.1" fill="none"/></svg>
  <!-- right strip -->
  <svg style="left:1180px;top:169px" width="20" height="20"><path d="M4 14.5V9A6 6 0 0 1 16 9V14.5L17.5 16H2.5Z" class="ic" style="stroke-width:1.2"/><path d="M8 18H12" class="ic" style="stroke-width:1.3"/><circle cx="15.5" cy="4" r="3.5" fill="#e55b5b"/></svg>
  <svg style="left:1180px;top:212px" width="22" height="18"><g transform="scale(1.0)"><path d="M1.5 14.5Q1 9 4.5 6.5Q7 5 11 5.5L13.5 5.8Q14.5 4 16.5 4.3Q18.8 4.8 18.5 2.8Q18.3 1.5 17 1.8M1.5 14.5Q3 12.5 4.5 14.5Q6 12.5 7.5 14.5L8.5 11.5Q10.5 12.5 12.5 11.5V14.5Q14 12.8 15.5 14L16 10Q18.5 8.5 18.5 6M9 6Q9.5 9.5 12.5 9" fill="none" stroke="#ced0d6" stroke-width="1.25" stroke-linecap="round" stroke-linejoin="round"/><circle cx="15.5" cy="6.8" r="0.7" fill="#ced0d6"/></g></svg>
  <svg style="left:1180px;top:250px" width="20" height="20"><path d="M9 8V2.5A1 1 0 0 0 8 1.5H3A1 1 0 0 0 2 2.5V16.5A1 1 0 0 0 3 17.5H6" class="ic"/><path d="M4.5 4H6.5" class="ic"/><path d="M8.5 17.5A5 5 0 0 1 18.5 17.5Z" class="ic"/><path d="M10.5 11L11.5 12.8M16.5 11L15.5 12.8" class="ic"/></svg>
  <div class="a" style="left:1175px;top:285px;width:30px;height:30px;border-radius:6px;background:#3574f0"></div>
  <svg style="left:1180px;top:290px" width="20" height="20"><path d="M9 7V3.5A1 1 0 0 0 8 2.5H4A1 1 0 0 0 3 3.5V15.5A1 1 0 0 0 4 16.5H6" stroke="#fff" stroke-width="1.2" fill="none"/><path d="M5 4.5H7" stroke="#fff" stroke-width="1.2"/><rect x="7" y="9.5" width="10" height="5.5" rx="0.8" stroke="#fff" stroke-width="1.2" fill="none"/><path d="M6.5 17.5H17" stroke="#fff" stroke-width="1.2"/><circle cx="16" cy="5.5" r="3.3" fill="#5fb865"/></svg>
  <svg style="left:1180px;top:330px" width="20" height="20"><path d="M10 1.5Q10.8 9.2 18.5 10Q10.8 10.8 10 18.5Q9.2 10.8 1.5 10Q9.2 9.2 10 1.5Z" fill="#ced0d6"/></svg>
  <svg style="left:1180px;top:370px" width="20" height="20"><circle cx="3.5" cy="4" r="1.8" class="ic" style="stroke-width:1.1"/><circle cx="3.5" cy="10" r="1.8" class="ic" style="stroke-width:1.1"/><circle cx="3.5" cy="16" r="1.8" class="ic" style="stroke-width:1.1"/><path d="M8 4H18M8 10H18M8 16H18" class="ic" style="stroke-width:1.2"/></svg>
  <!-- status bar -->
  <div class="a" style="left:2px;top:800px;width:1206px;height:1px;background:#1e1f22"></div>
  <!-- status bar content -->
  <svg style="left:16px;top:811px" width="9" height="9"><rect x="1" y="1" width="7" height="7" rx="1.5" stroke="#548af7" stroke-width="1.2" fill="none"/></svg>
  <div class="a ui" style="left:28px;top:807px;font-size:14px;color:#a8abb0">MyApplication</div>
  <svg style="left:124px;top:810px" width="7" height="10"><path d="M1.5 1.5L5 5L1.5 8.5" stroke="#a8abb0" stroke-width="1.1" fill="none" stroke-linecap="round"/></svg>
  <svg style="left:137px;top:811px" width="9" height="9"><rect x="1" y="1" width="7" height="7" rx="1.5" stroke="#548af7" stroke-width="1.2" fill="none"/></svg>
  <div class="a ui" style="left:152px;top:807px;font-size:14px;color:#a8abb0">app</div>
  <svg style="left:184px;top:810px" width="7" height="10"><path d="M1.5 1.5L5 5L1.5 8.5" stroke="#a8abb0" stroke-width="1.1" fill="none" stroke-linecap="round"/></svg>
  <div class="a ui" style="left:199px;top:807px;font-size:14px;color:#a8abb0">src</div>
  <svg style="left:226px;top:810px" width="7" height="10"><path d="M1.5 1.5L5 5L1.5 8.5" stroke="#a8abb0" stroke-width="1.1" fill="none" stroke-linecap="round"/></svg>
  <svg style="left:240px;top:811px" width="9" height="9"><rect x="1" y="1" width="7" height="7" rx="1.5" stroke="#548af7" stroke-width="1.2" fill="none"/></svg>
  <div class="a ui" style="left:255px;top:807px;font-size:14px;color:#a8abb0">main</div>
  <svg style="left:291px;top:810px" width="7" height="10"><path d="M1.5 1.5L5 5L1.5 8.5" stroke="#a8abb0" stroke-width="1.1" fill="none" stroke-linecap="round"/></svg>
  <div class="a ui" style="left:306px;top:807px;font-size:14px;color:#a8abb0">java</div>
  <svg style="left:340px;top:810px" width="7" height="10"><path d="M1.5 1.5L5 5L1.5 8.5" stroke="#a8abb0" stroke-width="1.1" fill="none" stroke-linecap="round"/></svg>
  <div class="a ui" style="left:355px;top:807px;font-size:14px;color:#a8abb0">com</div>
  <svg style="left:390px;top:810px" width="7" height="10"><path d="M1.5 1.5L5 5L1.5 8.5" stroke="#a8abb0" stroke-width="1.1" fill="none" stroke-linecap="round"/></svg>
  <div class="a ui" style="left:405px;top:807px;font-size:14px;color:#a8abb0">example</div>
  <svg style="left:466px;top:810px" width="7" height="10"><path d="M1.5 1.5L5 5L1.5 8.5" stroke="#a8abb0" stroke-width="1.1" fill="none" stroke-linecap="round"/></svg>
  <div class="a ui" style="left:481px;top:807px;font-size:14px;color:#a8abb0">myapplication</div>
  <svg style="left:575px;top:810px" width="7" height="10"><path d="M1.5 1.5L5 5L1.5 8.5" stroke="#a8abb0" stroke-width="1.1" fill="none" stroke-linecap="round"/></svg>
  <svg style="left:590px;top:808px" width="14" height="14"><path d="M1.5 1.5H12.5L7 7L12.5 12.5H1.5Z" stroke="#9c70d8" stroke-width="1.2" fill="#2b2531" stroke-linejoin="round"/></svg>
  <div class="a ui" style="left:610px;top:807px;font-size:14px;color:#a8abb0">MainActivity.kt</div>
  <div class="a ui" style="left:917px;top:807px;font-size:14px;color:#a8abb0">1:1</div>
  <div class="a ui" style="left:949px;top:807px;font-size:14px;color:#a8abb0">LF</div>
  <div class="a ui" style="left:980px;top:807px;font-size:14px;color:#a8abb0">UTF-8</div>
  <svg style="left:1036px;top:808px" width="16" height="16"><path d="M1.5 2.5H14.5V12.5H7L4.5 14.5V12.5H1.5Z" stroke="#a8abb0" stroke-width="1.2" fill="none" stroke-linejoin="round"/><path d="M8 5V8.5" stroke="#a8abb0" stroke-width="1.4"/><circle cx="8" cy="10.5" r="0.7" fill="#a8abb0"/></svg>
  <svg style="left:1069px;top:807px" width="17" height="17"><path d="M7 4Q7.6 9.4 13 10Q7.6 10.6 7 16Q6.4 10.6 1 10Q6.4 9.4 7 4Z" fill="#a8abb0"/><circle cx="12.5" cy="4.5" r="3" stroke="#a8abb0" stroke-width="1.1" fill="none"/><path d="M10.5 6.5L14.5 2.5" stroke="#a8abb0" stroke-width="1.1"/></svg>
  <div class="a ui" style="left:1104px;top:807px;font-size:14px;color:#a8abb0">4 spaces</div>
  <svg style="left:1177px;top:808px" width="17" height="16"><rect x="1.5" y="7" width="10" height="8" rx="1.2" stroke="#a8abb0" stroke-width="1.2" fill="none"/><path d="M8.5 7V4.5A2.8 2.8 0 0 1 14.1 4.5V6" stroke="#a8abb0" stroke-width="1.2" fill="none" stroke-linecap="round"/><rect x="6" y="10.3" width="1.5" height="1.5" fill="#a8abb0"/></svg>
</div>
<div class="a" style="left:2px;top:100px;width:1207px;height:731px;border-left:1px solid #5d6065;border-bottom:1px solid #64676c;border-radius:0 0 10px 10px;pointer-events:none"></div>
  <!-- noVNC handle -->
  <div class="a" style="left:4px;top:335px;width:15px;height:50px;background:#000;opacity:.6;border-radius:0 5px 5px 0"></div>
  <div class="a" style="left:2px;top:332px;width:15px;height:50px;background:#5e6b87;border-radius:0 5px 5px 0"></div>
  <svg style="left:2px;top:332px" width="15" height="50"><g fill="#a4adbf"><rect x="4.3" y="6.3" width="1.6" height="1.6"/><rect x="9.3" y="6.3" width="1.6" height="1.6"/><rect x="4.3" y="11.3" width="1.6" height="1.6"/><rect x="9.3" y="11.3" width="1.6" height="1.6"/><rect x="4.3" y="16.3" width="1.6" height="1.6"/><rect x="9.3" y="16.3" width="1.6" height="1.6"/><rect x="4.3" y="32.3" width="1.6" height="1.6"/><rect x="9.3" y="32.3" width="1.6" height="1.6"/><rect x="4.3" y="37.3" width="1.6" height="1.6"/><rect x="9.3" y="37.3" width="1.6" height="1.6"/><rect x="4.3" y="42.3" width="1.6" height="1.6"/><rect x="9.3" y="42.3" width="1.6" height="1.6"/></g><path d="M5 21.5L11 25L5 28.5Z" fill="#fff" stroke="#fff" stroke-width="1" stroke-linejoin="round"/></svg>
</body></html>
